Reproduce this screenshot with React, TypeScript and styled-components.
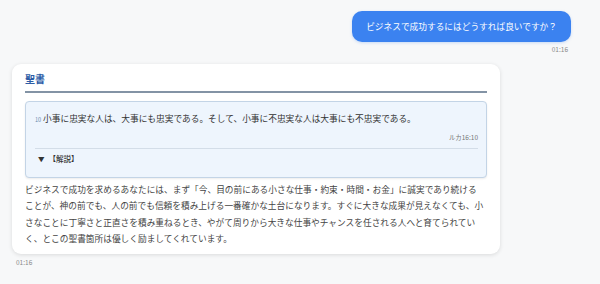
import React from "react";
import styled, { createGlobalStyle } from "styled-components";

const GlobalStyle = createGlobalStyle`
  body {
    margin: 0;
    background: #f7f8f9;
    font-family: "Noto Sans CJK JP", "Noto Sans", sans-serif;
  }
`;

const Chat = styled.div`
  display: flex;
  flex-direction: column;
  padding: 11px 29px 0 12px;
`;

const UserRow = styled.div`
  align-self: flex-end;
  display: flex;
  flex-direction: column;
  align-items: flex-end;
`;

const Bubble = styled.div`
  background: #3b82f0;
  color: #fff;
  border-radius: 10px;
  padding: 0 14px;
  height: 31px;
  line-height: 31px;
  font-size: 8.7px;
  box-shadow: 0 1px 3px rgba(59, 130, 240, 0.25);
`;

interface TimeProps {
  $left?: boolean;
}
const Time = styled.div<TimeProps>`
  font-size: 6.5px;
  line-height: 9px;
  color: #8a8a8a;
  margin-top: ${(p) => (p.$left ? "4px" : "3px")};
  padding: ${(p) => (p.$left ? "0 0 0 4px" : "0 3px 0 0")};
  align-self: ${(p) => (p.$left ? "flex-start" : "flex-end")};
`;

const Card = styled.div`
  margin-top: 10px;
  width: 488px;
  box-sizing: border-box;
  background: #fff;
  border-radius: 9px;
  box-shadow: 0 1px 4px rgba(0, 0, 0, 0.12);
  padding: 8px 13px 7px;
`;

const Title = styled.div`
  font-size: 10px;
  line-height: 13px;
  font-weight: bold;
  color: #2d5ca6;
  padding-bottom: 6px;
  border-bottom: 2px solid #8393a5;
`;

const VerseBox = styled.div`
  margin-top: 8px;
  background: #eef5fd;
  border: 1px solid #c3d4e6;
  border-radius: 4px;
  padding: 10px 8px 12px 9px;
  box-shadow: 0 1px 2px rgba(0, 0, 0, 0.08);
`;

const VerseText = styled.div`
  font-size: 8.7px;
  line-height: 14px;
  color: #333;
`;

const VerseNum = styled.span`
  font-size: 5.5px;
  color: #6b8ab0;
  margin-right: 2px;
`;

const VerseRef = styled.div`
  text-align: right;
  font-size: 6.5px;
  line-height: 9px;
  color: #777;
  margin-top: 6px;
`;

const Divider = styled.div`
  height: 1px;
  background: #d3dde8;
  margin: 6px 0 4px;
`;

const Explain = styled.div`
  display: flex;
  align-items: center;
  gap: 4px;
  font-size: 7.5px;
  line-height: 12px;
  font-weight: 500;
  color: #333;
  padding-left: 3px;
`;

const Arrow = styled.span`
  font-size: 6.5px;
`;

const Body = styled.p`
  margin: 4px 0 0;
  font-size: 8.7px;
  line-height: 16.3px;
  color: #444;
`;

export default function App() {
  return (
    <>
      <GlobalStyle />
      <Chat>
        <UserRow>
          <Bubble>ビジネスで成功するにはどうすれば良いですか？</Bubble>
          <Time>01:16</Time>
        </UserRow>
        <Card>
          <Title>聖書</Title>
          <VerseBox>
            <VerseText>
              <VerseNum>10</VerseNum>
              小事に忠実な人は、大事にも忠実である。そして、小事に不忠実な人は大事にも不忠実である。
            </VerseText>
            <VerseRef>ルカ16:10</VerseRef>
            <Divider />
            <Explain>
              <Arrow>▼</Arrow>
              <span>【解説】</span>
            </Explain>
          </VerseBox>
          <Body>
            ビジネスで成功を求めるあなたには、まず「今、目の前にある小さな仕事・約束・時間・お金」に誠実であり続ける
            <br />
            ことが、神の前でも、人の前でも信頼を積み上げる一番確かな土台になります。すぐに大きな成果が見えなくても、小
            <br />
            さなことに丁寧さと正直さを積み重ねるとき、やがて周りから大きな仕事やチャンスを任される人へと育てられてい
            <br />
            く、とこの聖書箇所は優しく励ましてくれています。
          </Body>
        </Card>
        <Time $left>01:16</Time>
      </Chat>
    </>
  );
}
